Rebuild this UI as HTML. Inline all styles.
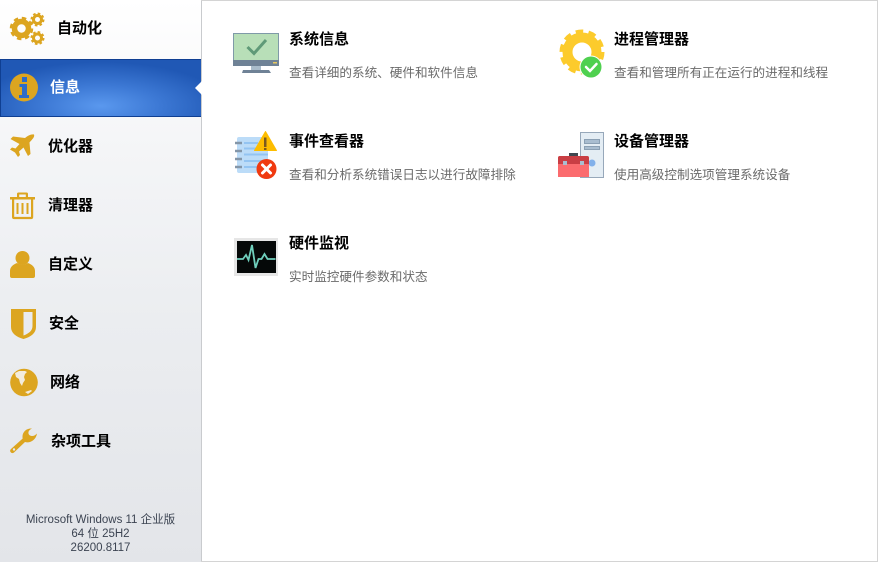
<!DOCTYPE html>
<html lang="zh"><head><meta charset="utf-8"><style>
html,body{margin:0;padding:0}
body{width:878px;height:562px;position:relative;overflow:hidden;background:#fff;font-family:"Liberation Sans","Noto Sans CJK SC",sans-serif}
#side{position:absolute;left:0;top:0;width:201px;height:562px;background:linear-gradient(#fff 0,#f4f5f7 150px,#ebedf0 320px,#e3e5e9 562px);border-right:1px solid #c9cbce}
#sel{position:absolute;left:0;top:59px;width:201px;height:58px;box-sizing:border-box;border:1px solid #0f3f92;border-right:0;background:radial-gradient(ellipse 125px 44px at 100px 46px,#5a98ee 0,#3c78d4 48%,#2058b5 100%)}
#arrow{position:absolute;left:195px;top:81px;width:0;height:0;border-top:7px solid transparent;border-bottom:7px solid transparent;border-right:7px solid #fff}
.n{position:absolute;font-size:15px;font-weight:700;color:#000;line-height:20px;white-space:nowrap}
.t{position:absolute;font-size:15px;font-weight:700;color:#000;line-height:20px;white-space:nowrap}
.d{position:absolute;font-size:12.6px;color:#6a6a6a;line-height:18px;white-space:nowrap}
.v{position:absolute;left:0;width:201px;text-align:center;font-size:11.5px;color:#3c4452;line-height:14px;white-space:nowrap}
svg{position:absolute;overflow:visible}
#edge{position:absolute;left:201px;top:0;width:677px;height:562px;box-sizing:border-box;border:1px solid #d4d4d4;border-left:0}
</style></head><body>
<div id="side"></div><div id="edge"></div><div id="sel"></div><div id="arrow"></div>

<svg style="left:0;top:0" width="60" height="55" fill="none" stroke="#dca520">
<circle cx="21.500" cy="28.500" r="7" stroke-width="5.500"/><circle cx="21.500" cy="28.500" r="10.500" stroke-width="2.500" stroke-dasharray="4.500 3.747"/>
<circle cx="37.500" cy="19.500" r="4" stroke-width="3"/><circle cx="37.500" cy="19.500" r="6" stroke-width="2" stroke-dasharray="2.560 2.152"/>
<circle cx="37.500" cy="38" r="4" stroke-width="3"/><circle cx="37.500" cy="38" r="6" stroke-width="2" stroke-dasharray="2.560 2.152"/>
</svg>

<svg style="left:0;top:59px" width="60" height="58">
<circle cx="24" cy="28.500" r="14" fill="#dca520"/>
<path d="M22 18h5v5h-5zM19.500 25H27v11h2v3H19v-3h3v-8h-2.500z" fill="#2e6cc8"/>
</svg>

<svg style="left:0;top:125px" width="40" height="40">
<path fill="#dca520" d="M34 9.500C31 9 28 10.500 25 13L13 11.500 10.500 14l9 5-4 4.500-3.500-1L10 24.500l5 3 3 4.500 2-2-1-3.500 4.500-4L28 31l2.500-2-1-11.500C32 14.500 35 12 34 9.500z"/>
</svg>

<svg style="left:0;top:180px" width="40" height="45">
<path fill="#dca520" d="M10 17h7v-3q0-1.500 1.500-1.500h8q1.500 0 1.500 1.500v3h7v2.500H10zm9.200 0h6.600v-2.500h-6.600z"/>
<path fill="none" stroke="#dca520" stroke-width="2.200" d="M13.100 19v18q0 1 1 1h17q1 0 1-1V19"/>
<path fill="none" stroke="#dca520" stroke-width="2" d="M17.500 23v11M22.500 23v11M27.500 23v11"/>
</svg>

<svg style="left:0;top:240px" width="40" height="45">
<circle cx="22.500" cy="18" r="7" fill="#dca520"/>
<path fill="#dca520" d="M10 36v-5c0-4 3-6.500 7-8q5.500 3.500 11 0c4 1.500 7 4 7 8v5q0 2-2 2H12q-2 0-2-2z"/>
</svg>

<svg style="left:0;top:305px" width="40" height="40">
<path fill="#dca520" d="M11 4h25v18c0 6-5 10-12.500 12C16 32 11 28 11 22z"/>
<path fill="#e9ebef" d="M23.500 7H32.500V21c0 4.500-3.500 7.500-9 9.500z"/>
</svg>

<svg style="left:0;top:365px" width="40" height="40">
<circle cx="24" cy="17.500" r="13.800" fill="#dca520"/>
<path fill="#f3ecdc" d="M15 8l4-2 6 0 2 1-2 2-1 3 1 3-2 3-1 3-2-3-1-4-3-2zM25 27l6-2 1 1-4 3z"/>
</svg>

<svg style="left:0;top:425px" width="40" height="40">
<path fill="#dca520" d="M32 3.500c-5-.5-9.500 3-9.500 8 0 .8 0 1.300.2 2L11 24q-1.500 1.500-.5 3 1.500 2 3.500.5l11-10.500c5 1.500 11-2 12-8.500-1.500 1.500-3 2.500-5 2.500-2.500 0-4-2-3.500-4 .3-1.300 1.500-2.500 3.500-3.500z"/>
<circle cx="14" cy="24.500" r="1.200" fill="#e6e8ec"/>
</svg>

<div class="n" style="left:57px;top:19px">自动化</div>
<div class="n" style="left:50px;top:78px;color:#fff">信息</div>
<div class="n" style="left:48px;top:137px">优化器</div>
<div class="n" style="left:48px;top:196px">清理器</div>
<div class="n" style="left:48px;top:255px">自定义</div>
<div class="n" style="left:49px;top:314px">安全</div>
<div class="n" style="left:50px;top:373px">网络</div>
<div class="n" style="left:51px;top:432px">杂项工具</div>

<div class="v" style="top:513px">Microsoft Windows 11 企业版</div>
<div class="v" style="top:527px">64 位 25H2</div>
<div class="v" style="top:541px">26200.8117</div>

<svg style="left:225px;top:20px" width="70" height="70">
<rect x="8.500" y="13.500" width="45" height="32" fill="#b8dfb8" stroke="#7f9aa8"/>
<rect x="8" y="40" width="46" height="6" fill="#6f8296"/>
<rect x="48" y="42" width="4" height="1.500" fill="#e8c860"/>
<rect x="26" y="46" width="10" height="4" fill="#a9bccb"/>
<path d="M18 50h26l2 3H17z" fill="#6f8296"/>
<path d="M22.500 27l6.500 6.500L41 20" fill="none" stroke="#5f9a78" stroke-width="3"/>
</svg>

<svg style="left:225px;top:120px" width="70" height="70">
<rect x="12" y="17" width="31" height="36" rx="2" fill="#bcdcf8"/>
<path d="M19 23h14M19 28.500h20M19 34.500h24M19 41h20M19 47h14" stroke="#93c4f2" stroke-width="2"/>
<path d="M10 23h7M10 31h7M10 39h7M10 47h7" stroke="#8496a8" stroke-width="2.500"/>
<path d="M40.500 11.500L51.500 30.500H29.500z" fill="#fdbd00" stroke="#fdbd00" stroke-width="1" stroke-linejoin="round"/>
<rect x="39" y="17.500" width="2.500" height="9.500" fill="#7a5a20"/><rect x="39" y="28" width="2.500" height="2" fill="#7a5a20"/>
<circle cx="41.500" cy="49" r="10" fill="#f03a10"/>
<path d="M37.500 45l8 8M45.500 45l-8 8" stroke="#fff" stroke-width="3" stroke-linecap="round"/>
</svg>

<svg style="left:225px;top:225px" width="70" height="70">
<rect x="9" y="13" width="44" height="38" fill="#e6e6e6"/>
<rect x="12" y="16" width="39" height="32" fill="#050808"/>
<path d="M12 34h6l3-4 2.500 5 3.500-15 3.500 23 3-9h3l3-5 3 5h8" fill="none" stroke="#6fcfbc" stroke-width="1.800"/>
</svg>

<svg style="left:550px;top:20px" width="70" height="70">
<circle cx="32" cy="32" r="14.500" fill="none" stroke="#fccb2c" stroke-width="10"/>
<circle cx="32" cy="32" r="20.500" fill="none" stroke="#fccb2c" stroke-width="4" stroke-dasharray="7.500 5.380"/>
<circle cx="41" cy="47" r="11.500" fill="#fff"/>
<circle cx="41" cy="47" r="10.500" fill="#4fd04f"/>
<path d="M36 47l4 4 6.500-7" fill="none" stroke="#fff" stroke-width="2.500" stroke-linecap="round"/>
</svg>

<svg style="left:550px;top:120px" width="70" height="70">
<rect x="30.500" y="12.500" width="23" height="45" fill="#e4edf4" stroke="#97a8ba"/>
<rect x="34.500" y="19.500" width="15" height="4" fill="#a9bdd0" stroke="#8ba0b4"/>
<rect x="34.500" y="26.500" width="15" height="3" fill="#a9bdd0" stroke="#8ba0b4"/>
<circle cx="42" cy="43" r="3.500" fill="#82b0ea"/>
<rect x="19" y="33" width="9" height="3" fill="#404850"/>
<path d="M8 38q0-2 2-2h27q2 0 2 2v19H8z" fill="#fb6b6e"/>
<path d="M8 38q0-2 2-2h27q2 0 2 2v6H8z" fill="#c93e44"/>
<rect x="13" y="41" width="4" height="4" fill="#a9bdd0"/><rect x="30" y="41" width="4" height="4" fill="#a9bdd0"/>
</svg>

<div class="t" style="left:289px;top:30px">系统信息</div>
<div class="d" style="left:289px;top:64px">查看详细的系统、硬件和软件信息</div>
<div class="t" style="left:614px;top:30px">进程管理器</div>
<div class="d" style="left:614px;top:64px">查看和管理所有正在运行的进程和线程</div>
<div class="t" style="left:289px;top:132px">事件查看器</div>
<div class="d" style="left:289px;top:166px">查看和分析系统错误日志以进行故障排除</div>
<div class="t" style="left:614px;top:132px">设备管理器</div>
<div class="d" style="left:614px;top:166px">使用高级控制选项管理系统设备</div>
<div class="t" style="left:289px;top:234px">硬件监视</div>
<div class="d" style="left:289px;top:268px">实时监控硬件参数和状态</div>
</body></html>
